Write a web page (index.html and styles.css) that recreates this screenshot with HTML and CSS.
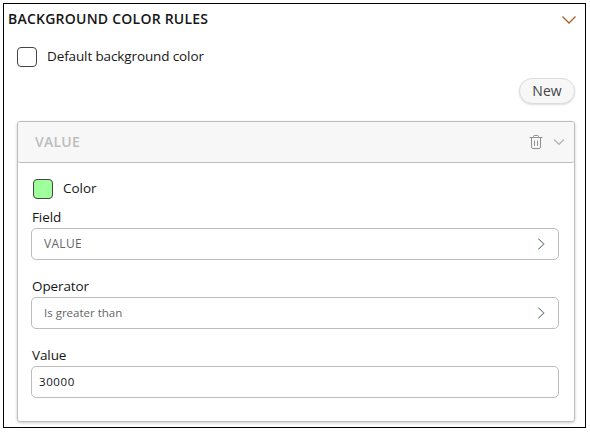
FILE: index.html
```html
<!DOCTYPE html>
<html lang="en">
<head>
<meta charset="utf-8">
<title>Background color rules</title>
<link rel="stylesheet" href="styles.css">
</head>
<body>
<main class="panel">
  <header class="panel-head">
    <h1 class="title">BACKGROUND COLOR RULES</h1>
    <svg class="panel-chevron" width="16" height="10" viewBox="0 0 16 10"><path d="M1.500 1.500 8 8l6.500-6.500"/></svg>
  </header>
  <div class="check-row"><i class="swatch"></i><span class="default-label">Default background color</span></div>
  <div class="actions"><button class="new-button">New</button></div>
  <section class="card">
    <header class="card-head">
      <h2 class="card-title">VALUE</h2>
      <svg class="trash" width="14" height="14" viewBox="0 0 14 14"><path d="M.5 2.500h13M4.500 2.500V1.300q0-.8.8-.8h3.400q.8 0 .8.8v1.200M2.500 2.500v9.500q0 1.500 1.500 1.500h6q1.500 0 1.500-1.500V2.500M5.500 5.500V11M8.500 5.500V11"/></svg>
      <svg class="card-chevron" width="12" height="8" viewBox="0 0 12 8"><path d="M1 1.500 6 6.300l5-4.800"/></svg>
    </header>
    <div class="card-body">
      <div class="color-row"><i class="swatch green"></i><span class="color-label">Color</span></div>
      <div class="field">
        <span class="field-label">Field</span>
        <div class="control picker"><span class="caps">VALUE</span><svg width="8" height="12" viewBox="0 0 8 12"><path class="tan" d="M1 .8 6.500 6 1 11.200"/><path class="blue" d="M1.700.8 7.200 6 1.700 11.200"/></svg></div>
      </div>
      <div class="field">
        <span class="field-label">Operator</span>
        <div class="control picker"><span>Is greater than</span><svg width="8" height="12" viewBox="0 0 8 12"><path class="tan" d="M1 .8 6.500 6 1 11.200"/><path class="blue" d="M1.700.8 7.200 6 1.700 11.200"/></svg></div>
      </div>
      <div class="field">
        <span class="field-label">Value</span>
        <div class="control number"><span class="digits">30000</span></div>
      </div>
    </div>
  </section>
</main>
</body>
</html>
```
FILE: styles.css
```css
* { box-sizing: border-box; }
body { margin: 0; padding: 3px; background: #fff; color: #161616; font: 14px/20px "Open Sans", "Noto Sans", sans-serif; }
svg { display: block; flex: none; fill: none; }
.panel { width: 583px; height: 425px; border: 1px solid #000; }
.panel-head { display: flex; align-items: center; justify-content: space-between; height: 31px; padding: 0 8px 0 4px; }
.title { margin: 0; padding-bottom: 1px; font-size: 14px; font-weight: 600; letter-spacing: .23px; white-space: nowrap; }
.panel-chevron { stroke: #a4622a; stroke-width: 1.3; }
.check-row { display: flex; align-items: center; gap: 10px; height: 20px; margin: 12px 0 0 13px; }
.swatch { width: 20px; height: 20px; border: 1px solid #444; border-radius: 4px; background: #fff; }
.green { background: #9fff9c; }
.default-label { padding-bottom: 2px; font-size: 13.5px; letter-spacing: -.12px; }
.actions { display: flex; justify-content: flex-end; padding: 11px 10px 0 0; }
.new-button { width: 56px; height: 26px; padding: 0; border: 1px solid #ddd; border-radius: 13px; background: #f7f7f7; box-shadow: 0 1px 2px #0002; color: #444; font: 14px/24px "Open Sans", sans-serif; }
.card { width: 558px; height: 301px; margin: 17px 0 0 13px; border: 1px solid #bcbcbc; border-radius: 3px; box-shadow: 0 1px 3px #0003; }
.card-head { display: flex; align-items: center; height: 41px; padding: 0 9px 0 17px; border-bottom: 1px solid #bcbcbc; border-radius: 2px; background: #f7f7f7; }
.card-title { margin: 0 auto 0 0; color: #bdbdbd; font-size: 14px; font-weight: 600; letter-spacing: .25px; }
.trash { stroke: #8f8f8f; stroke-width: 1; margin-right: 10px; }
.card-chevron { stroke: #b8b4b1; stroke-width: 1.3; }
.card-body { padding: 16px 15px 0 13px; }
.color-row { display: flex; align-items: center; gap: 10px; height: 20px; margin-left: 2px; }
.color-label { padding-bottom: 2px; font-size: 13.5px; letter-spacing: -.05px; }
.field { height: 69px; padding-top: 8px; }
.field-label { display: block; height: 21px; margin-left: 1px; font-size: 13.5px; letter-spacing: -.1px; }
.control { display: flex; align-items: center; height: 32px; border: 1px solid #bcbcbc; border-radius: 5px; font-size: 11.5px; background: #fff; }
.picker { justify-content: space-between; padding: 0 13px 0 12px; color: #666; }
.number { padding-left: 7px; }
.caps { font-size: 12px; letter-spacing: .3px; }
.digits { letter-spacing: .6px; }
.tan { stroke: #e0a866; }
.blue { stroke: #5688b8; }
```
